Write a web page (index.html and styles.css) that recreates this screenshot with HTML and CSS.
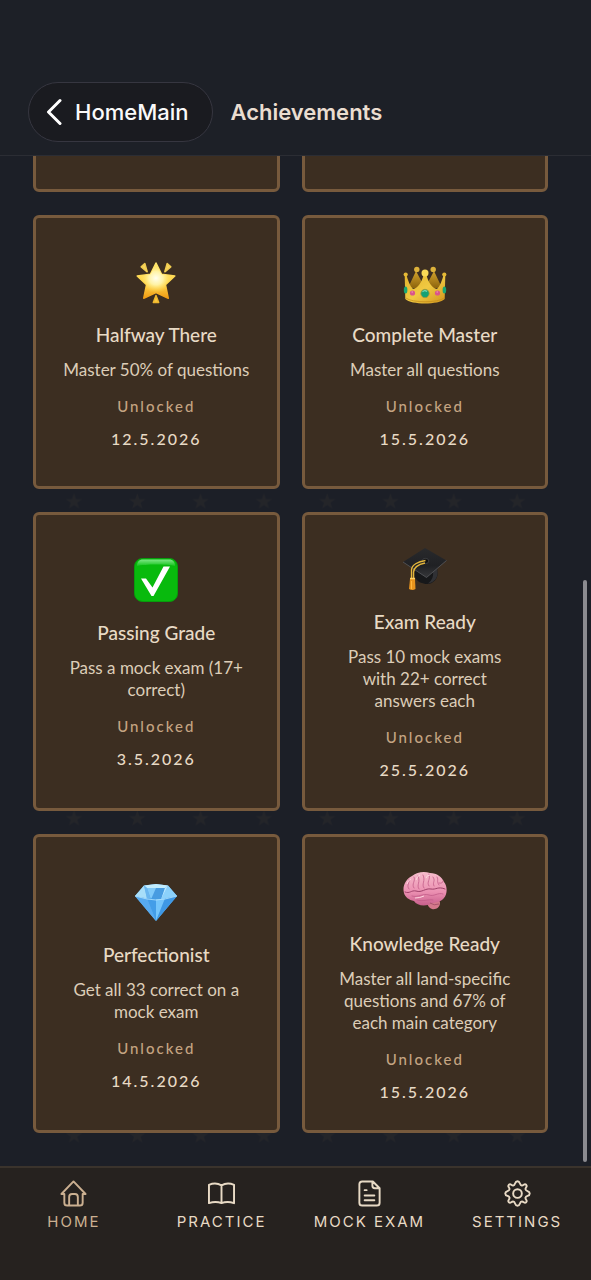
FILE: index.html
```html
<!DOCTYPE html>
<html lang="en">
<head>
<meta charset="utf-8">
<meta name="viewport" content="width=device-width, initial-scale=1">
<title>Achievements</title>
<link rel="stylesheet" href="styles.css">
</head>
<body>
<header class="topbar">
  <button class="back" type="button">
    <svg class="back-icon" viewBox="0 0 16 28" aria-hidden="true"><path d="M14 2.500L2.500 14L14 25.500"/></svg>
    HomeMain
  </button>
  <h1 class="screen-title">Achievements</h1>
</header>

<main class="content">
  <svg class="stars" aria-hidden="true">
    <defs>
      <pattern id="star" width="63.300" height="63.400" patternUnits="userSpaceOnUse">
        <path d="M32 24.500L34 30.200H40L35.200 33.800L37 39.500L32 36L27 39.500L28.800 33.800L24 30.200H30Z" fill="#242529"/>
      </pattern>
    </defs>
    <rect width="100%" height="100%" fill="url(#star)"/>
  </svg>

  <div class="grid">
    <article class="card"></article>
    <article class="card"></article>

    <article class="card">
      <div class="emoji"><svg viewBox="0 0 44 44" aria-hidden="true">
        <defs>
          <linearGradient id="gold" x1="0" y1="0" x2="0" y2="1"><stop offset="0" stop-color="#ffe66c"/><stop offset=".6" stop-color="#ffd347"/><stop offset="1" stop-color="#ef9a13"/></linearGradient>
          <radialGradient id="glow" cx=".5" cy=".43" r=".42"><stop offset="0" stop-color="#fffff0"/><stop offset=".45" stop-color="#fff6b0" stop-opacity=".9"/><stop offset="1" stop-color="#ffdf50" stop-opacity="0"/></radialGradient>
        </defs>
        <g stroke-linejoin="round" stroke-width="1.500">
          <path d="M22 3L27.500 14.200L40.800 16L31.500 24.800L34.300 38.300L22 32.500L9.700 38.300L12.500 24.800L3.200 16L16.500 14.200Z" fill="url(#gold)" stroke="url(#gold)"/>
          <path d="M22 3L27.500 14.200L40.800 16L31.500 24.800L34.300 38.300L22 32.500L9.700 38.300L12.500 24.800L3.200 16L16.500 14.200Z" fill="url(#glow)"/>
          <path d="M7.200 6.800L10.800 3.500L13.200 11.800ZM36.800 6.800L33.200 3.500L30.800 11.800Z" fill="#f7d65e" stroke="#f1cc50"/>
          <path d="M22 35.500L19.300 42.500H24.700Z" fill="#f9c941" stroke="#efb72d"/>
        </g>
      </svg></div>
      <h2 class="name">Halfway There</h2>
      <p class="desc">Master 50% of questions</p>
      <p class="status">Unlocked</p>
      <p class="date">12.5.2026</p>
    </article>

    <article class="card">
      <div class="emoji"><svg viewBox="0 0 44 44" aria-hidden="true">
        <defs>
          <linearGradient id="crown" x1="0" y1="0" x2="1" y2="1"><stop offset="0" stop-color="#e3b42d"/><stop offset=".5" stop-color="#f0c942"/><stop offset="1" stop-color="#d1951c"/></linearGradient>
          <linearGradient id="crown-back" x1="0" y1="0" x2="0" y2="1"><stop offset="0" stop-color="#d3a32c"/><stop offset="1" stop-color="#8d640d"/></linearGradient>
        </defs>
        <path d="M5 28L13 11L22 28L31 11L39 28Z" fill="url(#crown-back)"/>
        <circle cx="13.800" cy="9.500" r="2.700" fill="#ddb23b"/><circle cx="30.200" cy="9.500" r="2.700" fill="#ddb23b"/>
        <path d="M1.700 15.500L3.300 14.500C5 21 7 26 10 29C15 28 19 22 20.500 15H23.500C25 22 29 28 34 29C37 26 39 21 40.700 14.500L42.300 15.500L41.700 39C36 45 8 45 2.300 39Z" fill="url(#crown)"/>
        <circle cx="22" cy="13" r="3.500" fill="#f8d957"/><circle cx="2.700" cy="14.500" r="2.100" fill="#e4b936"/><circle cx="41.300" cy="14.500" r="2.100" fill="#e4b936"/>
        <path d="M3 38C9 43 35 43 41 38" fill="none" stroke="#c38b19" stroke-width=".7"/>
        <circle cx="22" cy="33.500" r="4.200" fill="#14a174" stroke="#ad9837" stroke-width=".8"/><path d="M19.500 32q2-2.500 4.500-.5" fill="none" stroke="#80d9b4" stroke-width="1.200"/>
        <circle cx="9.500" cy="33" r="2.600" fill="#d9568b"/><circle cx="34.500" cy="33" r="2.600" fill="#d9568b"/><path d="M8.500 32h1.500M33.500 32h1.500" stroke="#f2a0b9"/>
        <ellipse cx="2.600" cy="30" rx="1.800" ry="3.600" fill="#18a574"/><ellipse cx="41.400" cy="30" rx="1.800" ry="3.600" fill="#18a574"/>
      </svg></div>
      <h2 class="name">Complete Master</h2>
      <p class="desc">Master all questions</p>
      <p class="status">Unlocked</p>
      <p class="date">15.5.2026</p>
    </article>

    <article class="card">
      <div class="emoji"><svg viewBox="0 0 44 44" aria-hidden="true">
        <defs>
          <linearGradient id="gloss" x1="0" y1="0" x2="0" y2="1"><stop offset="0" stop-color="#7ee786"/><stop offset="1" stop-color="#14c31c"/></linearGradient>
        </defs>
        <rect x=".5" y=".5" width="43" height="43" rx="8" fill="#08ba0d" stroke="#079d0c"/>
        <path d="M3 8C3 4 5 1.500 9 1.500H35C39 1.500 41 4 41 8C33 6 11 6 3 8Z" fill="url(#gloss)"/>
        <path d="M7 20.500H12L18.500 29.500L29.500 8.500H36L19.500 38H17.500Z" fill="#fff"/>
      </svg></div>
      <h2 class="name">Passing Grade</h2>
      <p class="desc">Pass a mock exam (17+ correct)</p>
      <p class="status">Unlocked</p>
      <p class="date">3.5.2026</p>
    </article>

    <article class="card">
      <div class="emoji"><svg viewBox="0 0 44 44" aria-hidden="true">
        <defs>
          <linearGradient id="cap" x1="0" y1="0" x2="0" y2="1"><stop offset="0" stop-color="#292a2c"/><stop offset=".6" stop-color="#202124"/><stop offset="1" stop-color="#36373a"/></linearGradient>
        </defs>
        <path d="M12 22V30C14 35 20 37 24 37C30 37 35 32 34.500 26L34 19Z" fill="#17181a"/>
        <path d="M25 36.500C31 35.500 35 31 34.500 25L34 21L30 25Q31 32 25 36.500Z" fill="#303135"/>
        <path d="M0 15L22 1L43.500 13.500L23.500 30.500Z" fill="url(#cap)"/>
        <path d="M0 15L23.500 30.500L43.500 13.500" fill="none" stroke="#58595d" stroke-width=".8"/>
        <ellipse cx="22.500" cy="14" rx="3.300" ry="2.600" fill="#101113" stroke="#48494c" stroke-width=".7"/>
        <path d="M22.500 13.500C15 14.500 8.500 18 8.500 23V33M22 16C15 17.500 11 20 10.500 25V32" fill="none" stroke="#e3b63c" stroke-width="1.300"/>
        <path d="M7 32Q9.500 30 12 32L12.500 42Q9.500 44 6 42Z" fill="#e8941d"/><path d="M7 31.500H12" stroke="#ffd166" stroke-width="1.500"/><path d="M8.500 34V42" stroke="#ffb73d"/>
      </svg></div>
      <h2 class="name">Exam Ready</h2>
      <p class="desc">Pass 10 mock exams with 22+ correct answers each</p>
      <p class="status">Unlocked</p>
      <p class="date">25.5.2026</p>
    </article>

    <article class="card">
      <div class="emoji"><svg viewBox="0 0 44 44" aria-hidden="true">
        <path d="M1 16L10 5.500L22 4L34 5.500L43 16L22 41Z" fill="#68b9f4"/>
        <path d="M10 5.500L22 4L34 5.500L31 8H13Z" fill="#c2edff"/>
        <path d="M1 16L10 5.500L13 18.500Z" fill="#a8def9"/><path d="M10 5.500L13 8L17 19.500L13 18.500Z" fill="#6ab6ef"/>
        <path d="M13 8H31L27 19.500H17Z" fill="#489ce1"/><path d="M13 8H22L17 19.500Z" fill="#80cafa"/>
        <path d="M34 5.500L43 16L31 18.500L27 19.500Z" fill="#8bd1fb"/><path d="M34 5.500L31 8L27 19.500Z" fill="#bae8ff"/>
        <path d="M1 16L13 18.500L22 41Z" fill="#57aaf0"/><path d="M13 18.500H22V41Z" fill="#439de8"/><path d="M22 19.500L31 18.500L22 41Z" fill="#75c5fb"/><path d="M31 18.500L43 16L22 41Z" fill="#3e98e5"/>
        <path d="M1 16L13 19L22 20L31 19L43 16" fill="none" stroke="#b6e4fd" stroke-width=".8"/>
      </svg></div>
      <h2 class="name">Perfectionist</h2>
      <p class="desc">Get all 33 correct on a mock exam</p>
      <p class="status">Unlocked</p>
      <p class="date">14.5.2026</p>
    </article>

    <article class="card">
      <div class="emoji"><svg viewBox="0 0 44 44" aria-hidden="true">
        <defs>
          <linearGradient id="brain" x1="0" y1="0" x2="0" y2="1"><stop offset="0" stop-color="#f6bdcc"/><stop offset=".6" stop-color="#eb8fb1"/><stop offset="1" stop-color="#c85f8c"/></linearGradient>
        </defs>
        <path d="M24 32C28 29 37 29 37 34C37 38 33 41 29 40C26 39 24 36 24 32Z" fill="#d4798c"/>
        <path d="M1 24C-1 17 3 10 9 7C14 3 21 2 27 4C34 4 39 8 41 13C45 18 44 26 41 29C38 33 34 33 30 34C23 38 14 37 11 32C6 31 2 28 1 24Z" fill="url(#brain)"/>
        <g fill="none" stroke="#c25c88" stroke-width=".8" stroke-linecap="round">
          <path d="M2 23C7 25 8 21 13 22C19 24 22 19 28 20C33 21 35 17 42 20" stroke="#9e4069" stroke-width="1"/>
          <path d="M9 27C15 29 20 24 26 26C31 28 35 23 40 25M14 31C20 33 24 30 30 31"/>
          <path d="M6 20C3 16 7 14 6 10M11 19C8 15 13 12 11 8M16 20C13 16 18 13 15 7M21 19C18 15 23 12 20 6M26 17C23 13 28 11 26 5M31 17C29 13 33 12 30 8M36 16C33 12 36 11 34 8M36 14Q40 15 40 12"/>
        </g>
        <path d="M4 15Q5 11 8 10M13 11Q14 7 17 6M23 9Q24 6 27 6M12 29Q17 29 21 27" fill="none" stroke="#ffd5df" stroke-width="1"/>
        <path d="M27 34Q31 37 36 35" fill="none" stroke="#a9566d"/>
      </svg></div>
      <h2 class="name">Knowledge Ready</h2>
      <p class="desc">Master all land-specific questions and 67% of each main category</p>
      <p class="status">Unlocked</p>
      <p class="date">15.5.2026</p>
    </article>
  </div>
  <div class="scrollbar"></div>
</main>

<nav class="tabs">
  <a class="tab active" href="#home">
    <svg viewBox="0 0 28 28" aria-hidden="true"><path d="M1.500 14.500L14 1.500L26.500 14.500H23.500V23.500Q23.500 26.500 20.500 26.500H7.500Q4.500 26.500 4.500 23.500V14.500ZM9.500 26V17.500Q9.500 14.500 12.500 14.500H15.500Q18.500 14.500 18.500 17.500V26"/></svg>
    <span>HOME</span>
  </a>
  <a class="tab" href="#practice">
    <svg viewBox="0 0 28 28" aria-hidden="true"><path d="M14 5.500Q8 2 1 5V24Q8 21.500 14 24Q20 21.500 27 24V5Q20 2 14 5.500ZM14 5.500V24"/></svg>
    <span>PRACTICE</span>
  </a>
  <a class="tab" href="#mock-exam">
    <svg viewBox="0 0 28 28" aria-hidden="true"><path d="M17.500 1.500H6.500Q3.500 1.500 3.500 4.500V23.500Q3.500 26.500 6.500 26.500H21.500Q24.500 26.500 24.500 23.500V8.500ZM17 1.500V6Q17 8.500 19.500 8.500H24M9 10.500H11M9 16H19M9 21H19"/></svg>
    <span>MOCK EXAM</span>
  </a>
  <a class="tab" href="#settings">
    <svg viewBox="0 0 28 28" aria-hidden="true"><circle cx="14" cy="14" r="4.500"/><path d="M14 1.300C17.300 1.300 15.800 5.400 18.400 5.700C20.500 6 21 3.200 23 5C24.800 7 22 7.500 22.300 9.600C22.600 12.200 26.700 10.700 26.700 14C26.700 17.300 22.600 15.800 22.300 18.400C22 20.500 24.800 21 23 23C21 24.800 20.500 22 18.400 22.300C15.800 22.600 17.300 26.700 14 26.700C10.700 26.700 12.200 22.600 9.600 22.300C7.500 22 7 24.800 5 23C3.200 21 6 20.500 5.700 18.400C5.400 15.800 1.300 17.300 1.300 14C1.300 10.700 5.400 12.200 5.700 9.600C6 7.500 3.200 7 5 5C7 3.200 7.500 6 9.600 5.700C12.200 5.400 10.700 1.300 14 1.300Z"/></svg>
    <span>SETTINGS</span>
  </a>
</nav>
</body>
</html>
```
FILE: styles.css
```css
* { box-sizing: border-box; }

body {
  margin: 0;
  height: 100vh;
  display: flex;
  flex-direction: column;
  background: #1c1f27;
  color: #e8dac5;
  font-family: Lato, "Liberation Sans", sans-serif;
}

h1, h2, p { margin: 0; }

.topbar {
  display: flex;
  align-items: center;
  gap: 17px;
  padding: 82px 28px 13px;
  background: #1d2027;
  border-bottom: 1px solid #2b2d34;
  font-family: Inter, "Liberation Sans", sans-serif;
}

.back {
  display: flex;
  align-items: center;
  gap: 13px;
  height: 60px;
  padding: 0 24px 0 17px;
  border: 1px solid #363640;
  border-radius: 30px;
  background: #1a1b20;
  color: #fafafa;
  font: inherit;
  font-size: 22px;
  font-weight: 500;
}

.back-icon {
  width: 16px;
  height: 28px;
  fill: none;
  stroke: #fff;
  stroke-width: 3;
  stroke-linecap: round;
  stroke-linejoin: round;
}

.screen-title {
  color: #eaddd0;
  font-size: 22px;
  font-weight: 600;
}

.content {
  position: relative;
  flex: 1;
  min-height: 0;
  overflow: hidden;
  display: flex;
  flex-direction: column;
  justify-content: flex-end;
  padding: 0 43px 33px 33px;
}

.stars {
  position: absolute;
  left: 42px;
  bottom: 0;
  width: calc(100% - 84px);
  height: 1014px;
}

.grid {
  position: relative;
  display: grid;
  grid-template-columns: 1fr 1fr;
  gap: 23px 22px;
}

.card {
  min-height: 274px;
  display: flex;
  flex-direction: column;
  align-items: center;
  justify-content: center;
  padding: 27px 27px 28px;
  border: 3px solid #775a3d;
  border-radius: 6px;
  background: #3c2e21;
  text-align: center;
}

.emoji {
  height: 54px;
  display: flex;
  align-items: center;
  margin-bottom: 12px;
}

.emoji svg {
  width: 44px;
  height: 44px;
}

.name {
  margin-bottom: 10px;
  font-size: 19px;
  font-weight: 500;
  line-height: 28px;
}

.desc {
  margin-bottom: 15px;
  color: #dccdb8;
  font-size: 17px;
  line-height: 22px;
}

.status {
  margin-bottom: 13px;
  color: #c4a482;
  font-size: 15px;
  font-weight: 500;
  letter-spacing: 2px;
  line-height: 20px;
}

.date {
  font-size: 16px;
  font-weight: 500;
  letter-spacing: 2px;
  line-height: 20px;
}

.scrollbar {
  position: absolute;
  top: 42%;
  right: 4px;
  bottom: 4px;
  width: 4px;
  border-radius: 2px;
  background: #8b8b90;
}

.tabs {
  display: grid;
  grid-template-columns: repeat(4, 1fr);
  padding: 12px 0 48px;
  border-top: 2px solid #3a332c;
  background: #26221f;
  font-family: Inter, "Liberation Sans", sans-serif;
}

.tab {
  display: flex;
  flex-direction: column;
  align-items: center;
  gap: 5px;
  color: #e8dac5;
  font-size: 15px;
  letter-spacing: 2px;
  line-height: 20px;
  text-decoration: none;
  white-space: nowrap;
}

.tab.active { color: #cbb091; }

.tab svg {
  width: 27px;
  height: 27px;
  fill: none;
  stroke: currentColor;
  stroke-width: 2;
  stroke-linecap: round;
  stroke-linejoin: round;
}
```
